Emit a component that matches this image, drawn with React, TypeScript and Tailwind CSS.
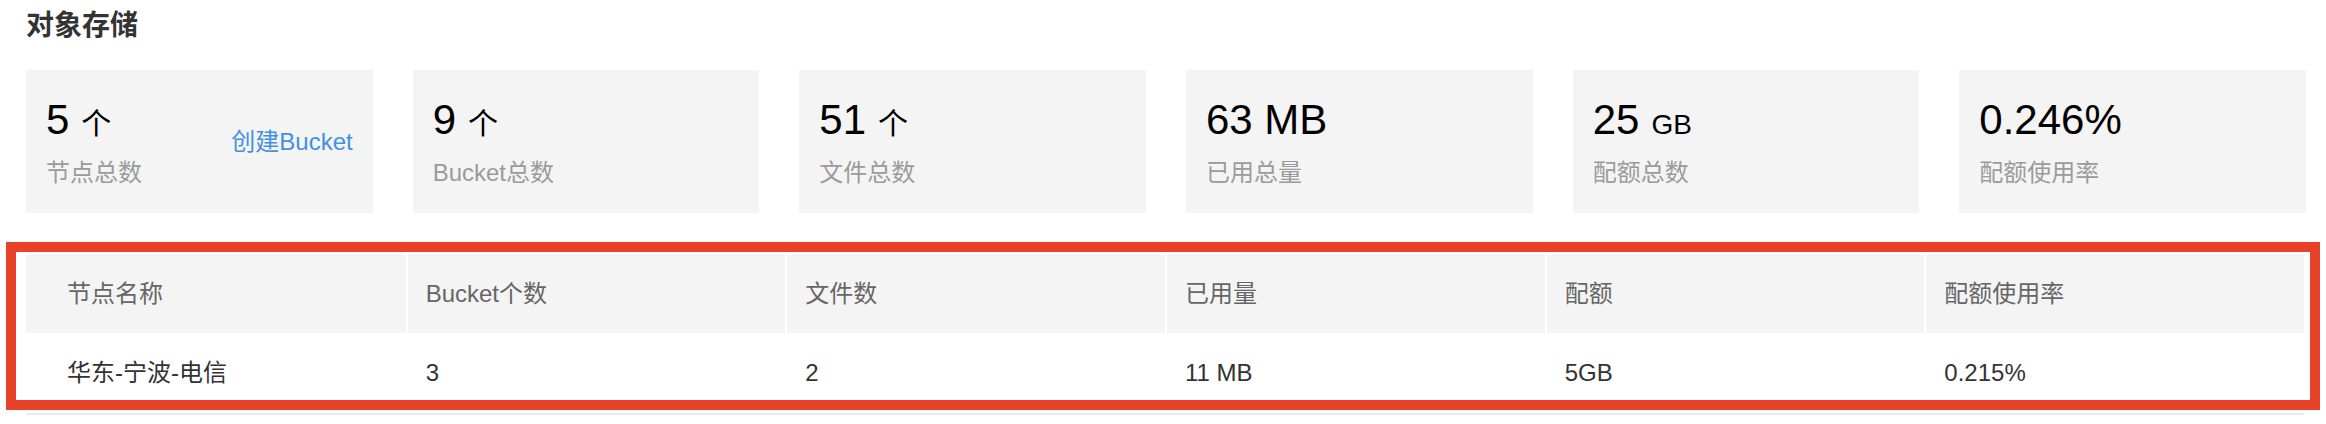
import React from "react";

const stats = [
  { value: "5", unit: "个", label: "节点总数", link: "创建Bucket" },
  { value: "9", unit: "个", label: "Bucket总数" },
  { value: "51", unit: "个", label: "文件总数" },
  { value: "63 MB", unit: "", label: "已用总量" },
  { value: "25", unit: "GB", label: "配额总数" },
  { value: "0.246%", unit: "", label: "配额使用率" },
];

const columns = ["节点名称", "Bucket个数", "文件数", "已用量", "配额", "配额使用率"];

const rows = [["华东-宁波-电信", "3", "2", "11 MB", "5GB", "0.215%"]];

const StatCard = ({ value, unit, label, link }: any) => {
  return (
    <div className="flex h-[143px] items-center justify-between bg-[#f4f4f4] px-5">
      <div className="flex flex-col">
        <p className="text-[42px] leading-[42px] text-black">
          {value}
          {unit === "个" && <span className="ml-[12px] text-[30px] leading-none">{unit}</span>}
          {unit === "GB" && <span className="ml-[12px] text-[28px] leading-none">{unit}</span>}
        </p>
        <p className="mt-5 text-[24px] leading-[24px] text-[#9b9b9b]">{label}</p>
      </div>
      {link && (
        <a className="cursor-pointer text-[24px] leading-[24px] text-[#4290e6]">{link}</a>
      )}
    </div>
  );
};

export default function App() {
  return (
    <div className="h-[424px] overflow-hidden bg-white pl-[26px] pr-[20px] pt-[6px] font-['Liberation_Sans','Noto_Sans_CJK_SC',sans-serif]">
      <h1 className="text-[28px] font-bold leading-[40px] text-[#333]">对象存储</h1>

      <div className="mt-6 grid grid-cols-6 gap-10">
        {stats.map((s) => (
          <StatCard key={s.label} {...s} />
        ))}
      </div>

      <div className="relative mr-[2px] mt-[41px]">
        <div className="grid h-[79px] grid-cols-6 bg-[#f4f4f4] text-[24px] text-[#666]">
          {columns.map((c, i) => (
            <div
              key={c}
              className={
                i === 0
                  ? "flex items-center pl-[41px]"
                  : "flex items-center border-l-2 border-white pl-[18px]"
              }
            >
              {c}
            </div>
          ))}
        </div>
        {rows.map((r) => (
          <div
            key={r[0]}
            className="grid h-[82px] grid-cols-6 border-b-2 border-[#ebebeb] text-[24px] text-[#333]"
          >
            {r.map((cell, i) => (
              <div key={i} className={i === 0 ? "flex items-center pl-[41px]" : "flex items-center pl-[20px]"}>
                {cell}
              </div>
            ))}
          </div>
        ))}
        {/* annotation box */}
        <div className="pointer-events-none absolute -left-5 -right-4 -top-3 bottom-[5px] border-[10px] border-[#e8412b]" />
      </div>
    </div>
  );
}
